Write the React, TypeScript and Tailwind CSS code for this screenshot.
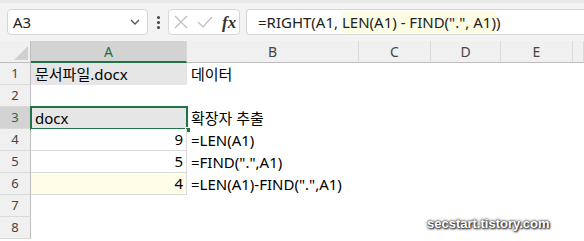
import React from "react";

const font = { fontFamily: '"Noto Sans", "Noto Sans CJK KR", sans-serif' };

function ColHead({ label, sel, w }: { label: string; sel?: boolean; w: string }) {
  return (
    <div
      className={`${w} h-[22px] flex items-center justify-center text-[14px] border-r border-[#dadada] ${
        sel
          ? "bg-[#d3d3d3] text-[#1d6b3f] border-b-2 border-b-[#217346]"
          : "bg-[#f0f0f0] text-[#444] border-b border-b-[#bdbdbd]"
      }`}
    >
      {label}
    </div>
  );
}

function RowHead({ n, sel }: { n: number; sel?: boolean }) {
  return (
    <div
      className={`w-[31px] h-[22px] flex items-center justify-center text-[13px] border-r border-r-[#bdbdbd] border-b border-b-[#dadada] ${
        sel ? "bg-[#d3d3d3] text-[#1d6b3f]" : "bg-[#f0f0f0] text-[#444]"
      }`}
    >
      {n}
    </div>
  );
}

export default function App() {
  const rows: {
    a: string;
    aAlign?: "right";
    aBg?: string;
    b: string;
    grid?: boolean;
    sel?: boolean;
  }[] = [
    { a: "문서파일.docx", aBg: "bg-[#e6e6e6]", b: "데이터" },
    { a: "", b: "" },
    { a: "docx", aBg: "bg-[#e6e6e6]", b: "확장자 추출", sel: true },
    { a: "9", aAlign: "right", b: "=LEN(A1)", grid: true },
    { a: "5", aAlign: "right", b: '=FIND(".",A1)', grid: true },
    { a: "4", aAlign: "right", aBg: "bg-[#fefde8]", b: '=LEN(A1)-FIND(".",A1)', grid: true },
    { a: "", b: "" },
    { a: "", b: "" },
  ];
  return (
    <div className="w-[584px] h-[241px] overflow-hidden bg-white text-black" style={font}>
      {/* top bar */}
      <div className="h-[41px] bg-[#f3f3f3] border-t-[3px] border-t-[#e9e9e9] flex items-center pl-[7px] gap-[6px]">
        <div className="w-[141px] h-[26px] bg-white border border-[#d6d6d6] rounded-[4px] flex items-center justify-between pl-[5px] pr-[6px]">
          <span className="text-[15px] text-[#222]">A3</span>
          <svg width="12" height="8" viewBox="0 0 12 8">
            <path d="M2 2 L6 6 L10 2" stroke="#555" strokeWidth="1.3" fill="none" />
          </svg>
        </div>
        <div className="w-[8px] flex flex-col items-center gap-[2px]">
          <span className="w-[3px] h-[3px] bg-[#444] rounded-full" />
          <span className="w-[3px] h-[3px] bg-[#444] rounded-full" />
          <span className="w-[3px] h-[3px] bg-[#444] rounded-full" />
        </div>
        <div className="w-[72px] h-[26px] bg-white border border-[#d6d6d6] rounded-[4px] flex items-center pl-[5px] gap-[9px]">
          <svg width="14" height="14" viewBox="0 0 14 14">
            <path d="M1 1 L13 13 M13 1 L1 13" stroke="#bdbdbd" strokeWidth="1.2" />
          </svg>
          <svg width="16" height="12" viewBox="0 0 16 12">
            <path d="M1 6 L6 11 L15 1" stroke="#bdbdbd" strokeWidth="1.2" fill="none" />
          </svg>
          <span
            className="text-[17px] text-[#333] italic font-bold leading-none"
            style={{ fontFamily: '"Liberation Serif", serif' }}
          >
            fx
          </span>
        </div>
        <div className="flex-1 h-[26px] bg-white border border-[#d6d6d6] rounded-l-[4px] border-r-0 flex items-center pl-[11px] text-[15px] text-[#222] whitespace-pre">
          <span>=RIGHT(A1, </span>
          <span className="bg-[#fdfde6]">LEN(A1) - FIND(".", A1)</span>
          <span>)</span>
        </div>
      </div>
      {/* header row */}
      <div className="flex">
        <div className="w-[31px] h-[22px] bg-[#f0f0f0] border-r border-r-[#bdbdbd] border-b border-b-[#bdbdbd] flex items-end justify-end pr-[2px] pb-[2px]">
          <svg width="14" height="14" viewBox="0 0 14 14">
            <path d="M14 0 L14 14 L0 14 Z" fill="#d0d0d0" />
          </svg>
        </div>
        <ColHead label="A" sel w="w-[156px]" />
        <ColHead label="B" w="w-[172px]" />
        <ColHead label="C" w="w-[72px]" />
        <ColHead label="D" w="w-[70px]" />
        <ColHead label="E" w="w-[72px]" />
        <ColHead label="" w="flex-1" />
      </div>
      {rows.map((r, i) => (
        <div key={i} className="flex">
          <RowHead n={i + 1} sel={r.sel} />
          <div
            className={`relative w-[156px] h-[22px] flex items-center px-[4px] text-[15px] ${
              r.aAlign === "right" ? "justify-end pr-[3px]" : ""
            } ${r.aBg ?? "bg-white"} ${r.grid ? "border-b border-b-[#dadada] border-r border-r-[#dadada]" : ""}`}
          >
            {r.a}
            {r.sel && (
              <>
                <div className="absolute -left-px -top-px -right-px -bottom-px border-2 border-[#217346]" />
                <div className="absolute -right-[4px] -bottom-[4px] w-[6px] h-[6px] bg-[#217346] border border-white" />
              </>
            )}
          </div>
          <div className="h-[22px] flex-1 flex items-center pl-[4px] text-[15px] whitespace-nowrap">
            {r.b}
          </div>
        </div>
      ))}
      <div className="relative">
        <div
          className="absolute left-[427px] top-[-22px] text-[13px] font-bold text-white leading-none"
          style={{
            fontFamily: '"Liberation Sans", sans-serif',
            textShadow: "0 0 2px #333, 0 0 3px #333, 1px 1px 2px #222",
          }}
        >
          secstart.tistory.com
        </div>
      </div>
    </div>
  );
}
